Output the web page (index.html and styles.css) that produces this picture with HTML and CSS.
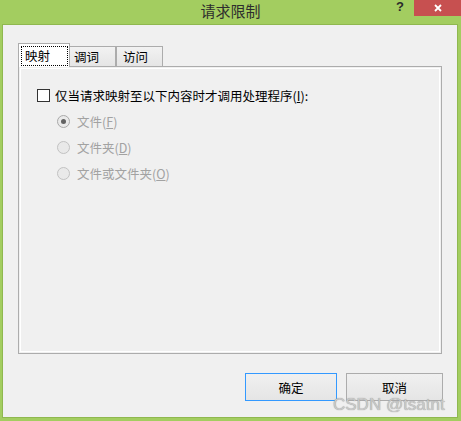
FILE: index.html
```html
<!DOCTYPE html>
<html lang="zh-CN">
<head>
  <meta charset="UTF-8" />
  <title>请求限制</title>
  <link rel="stylesheet" href="styles.css">
</head>
<body>
  <div class="window">
    <div class="titlebar">
      <div></div>
      <div class="title">请求限制</div>
      <div class="controls">
        <span class="help">?</span>
        <span class="close">
          <svg width="8" height="8" viewBox="0 0 8 8"><path d="M1 1 L7 7 M7 1 L1 7" stroke="#fff" stroke-width="1.8"/></svg>
        </span>
      </div>
    </div>

    <div class="client">
      <div class="tabs">
        <div class="tab active"><span class="focus">映射</span></div>
        <div class="tab second">调词</div>
        <div class="tab third">访问</div>
      </div>

      <div class="panel">
        <div class="row check-row">
          <span class="checkbox"></span>
          <span>仅当请求映射至以下内容时才调用处理程序(<u>I</u>):</span>
        </div>
        <div class="row radio-row">
          <span class="radio checked"></span>
          <span>文件(<u>F</u>)</span>
        </div>
        <div class="row radio-row">
          <span class="radio"></span>
          <span>文件夹(<u>D</u>)</span>
        </div>
        <div class="row radio-row">
          <span class="radio"></span>
          <span>文件或文件夹(<u>O</u>)</span>
        </div>
      </div>

      <div class="buttons">
        <button class="btn btn-ok">确定</button>
        <button class="btn btn-cancel">取消</button>
      </div>
    </div>

    <div class="watermark">CSDN @tsatnt</div>
  </div>
</body>
</html>
```

FILE: styles.css
```css
body {
  margin: 0;
  font-family: "Noto Sans CJK SC", "Microsoft YaHei", sans-serif;
  font-size: 12.5px;
  color: #000;
}

.window {
  width: 461px;
  height: 421px;
  box-sizing: border-box;
  padding: 0 3px 3px 2px;
  background: #a3cd60;
  display: flex;
  flex-direction: column;
  position: relative;
}

/* title bar */
.titlebar {
  height: 24px;
  margin: 0 -3px 0 -2px;
  display: grid;
  grid-template-columns: 1fr auto 1fr;
}

.title {
  font-size: 15px;
  line-height: 22px;
  color: #2e2e2e;
}

.controls {
  display: flex;
  justify-content: flex-end;
  align-items: flex-start;
}

.help {
  font-family: "Liberation Sans", Arial, sans-serif;
  font-weight: bold;
  font-size: 13px;
  line-height: 14px;
  color: #2b2b2b;
  margin-right: 10px;
}

.close {
  width: 47px;
  height: 16px;
  background: #c75050;
  display: flex;
  align-items: center;
  justify-content: center;
}

/* client area */
.client {
  flex: 1;
  border: 1px solid #8fb84f;
  background: #f0f0f0;
  padding: 18px 15px 16px 15px;
  display: flex;
  flex-direction: column;
}

.tabs {
  display: flex;
  align-items: flex-end;
  height: 23px;
}

.tab {
  box-sizing: border-box;
  height: 20px;
  border: 1px solid #acacac;
  border-bottom: none;
  background: linear-gradient(#f2f2f2, #e5e5e5);
  padding-left: 6px;
  line-height: 19px;
}

.tab.second {
  width: 46px;
  border-left: none;
  padding-left: 4px;
}

.tab.third {
  width: 47px;
}

.tab.active {
  width: 52px;
  height: 24px;
  background: #fff;
  margin-bottom: -1px;
  padding: 2px 1px 0 2px;
  position: relative;
  z-index: 1;
}

.focus {
  display: block;
  height: 20px;
  box-sizing: border-box;
  border: 1px dotted #000;
  padding-left: 3px;
  line-height: 18px;
}

.panel {
  flex: 1;
  border: 1px solid #acacac;
  box-shadow: inset 0 0 0 1px #f0f0f0, inset 0 0 0 2px #fff;
  padding: 15px 0 0 17px;
}

.row {
  height: 26px;
  display: flex;
  align-items: center;
}

.checkbox {
  width: 13px;
  height: 13px;
  box-sizing: border-box;
  border: 1px solid #333;
  background: #fff;
  margin-right: 5px;
  margin-left: 1px;
}

.radio-row {
  padding-left: 21px;
  color: #a2a2a2;
}

.radio {
  width: 13px;
  height: 13px;
  box-sizing: border-box;
  border: 1px solid #c2c2c2;
  border-radius: 50%;
  background: #e9e9e9;
  margin-right: 7px;
  display: flex;
  align-items: center;
  justify-content: center;
}

.radio.checked {
  border-color: #a9a9a9;
}

.radio.checked::after {
  content: "";
  width: 5px;
  height: 5px;
  border-radius: 50%;
  background: #626262;
}

/* buttons */
.buttons {
  margin-top: 19px;
  display: flex;
  justify-content: flex-end;
  gap: 9px;
  margin-right: -1px;
}

.btn {
  height: 28px;
  box-sizing: border-box;
  border: 1px solid #acacac;
  background: linear-gradient(#f0f0f0, #e5e5e5);
  font-family: inherit;
  font-size: 12.5px;
  color: #000;
  padding: 0;
}

.btn-ok {
  width: 92px;
  border-color: #3399ff;
}

.btn-cancel {
  width: 97px;
}

.watermark {
  position: absolute;
  left: 333px;
  top: 396px;
  font-family: "Liberation Sans", Arial, sans-serif;
  font-size: 17px;
  line-height: 17px;
  color: #c9c9c9;
  text-shadow: 0 0 1px #8a8a8a;
  white-space: nowrap;
}
```
